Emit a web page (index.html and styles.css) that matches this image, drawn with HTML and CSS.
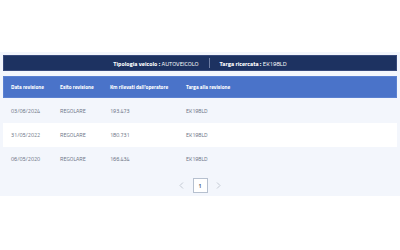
FILE: index.html
```html
<!DOCTYPE html>
<html lang="it">
<head>
<meta charset="utf-8">
<link rel="stylesheet" href="styles.css">
</head>
<body>
<section class="panel">
  <div class="summary">
    <span><b>Tipologia veicolo :</b> AUTOVEICOLO</span>
    <span class="sep"></span>
    <span><b>Targa ricercata :</b> EK198LD</span>
  </div>
  <div class="table">
    <div class="row head">
      <div>Data revisione</div><div>Esito revisione</div><div>Km rilevati dall'operatore</div><div>Targa alla revisione</div>
    </div>
    <div class="row">
      <div>03/06/2024</div><div>REGOLARE</div><div>193.473</div><div>EK198LD</div>
    </div>
    <div class="row alt">
      <div>31/05/2022</div><div>REGOLARE</div><div>180.731</div><div>EK198LD</div>
    </div>
    <div class="row">
      <div>06/05/2020</div><div>REGOLARE</div><div>166.434</div><div>EK198LD</div>
    </div>
  </div>
  <nav class="pager">
    <span class="chev">
      <svg width="5" height="7" viewBox="0 0 5 7"><path d="M4 0.5 L1 3.5 L4 6.5" fill="none" stroke="#c3c9d3" stroke-width="1"/></svg>
    </span>
    <span class="page">1</span>
    <span class="chev">
      <svg width="5" height="7" viewBox="0 0 5 7"><path d="M1 0.5 L4 3.5 L1 6.5" fill="none" stroke="#c3c9d3" stroke-width="1"/></svg>
    </span>
  </nav>
</section>
</body>
</html>
```
FILE: styles.css
```css
html, body { margin: 0; padding: 0; background: #ffffff; }
body { font-family: "Titillium Web", Lato, "Open Sans", sans-serif; }
.panel {
  margin-top: 52px;
  background: #f3f6fc;
  padding: 3px 3px 3px 3px;
  height: 144px;
  box-sizing: border-box;
}
.summary {
  height: 16px;
  background: #1d3261;
  color: #ffffff;
  font-size: 6.1px;
  display: flex;
  align-items: center;
  justify-content: center;
  gap: 10px;
  border: 1px solid #37497a;
  box-sizing: border-box;
}
.summary b { font-weight: 700; }
.sep { width: 1px; height: 10px; background: #6f7ea3; }
.table { margin-top: 5px; }
.row {
  display: grid;
  grid-template-columns: 49px 50px 76px 1fr;
  padding-left: 8px;
  height: 24px;
  align-items: center;
  font-size: 5.5px;
  color: #6b7385;
}
.row.head {
  background: #4a73c9;
  color: #ffffff;
  font-weight: 700;
  font-size: 5.3px;
  height: 22px;
  border: 1px solid #5a80d0;
  box-sizing: border-box;
  padding-left: 7px;
  margin-bottom: 1px;
}
.row.alt { background: #ffffff; }
.pager {
  display: flex;
  justify-content: center;
  align-items: center;
  gap: 8px;
  margin-top: 7px;
}
.chev { display: flex; width: 6px; justify-content: center; }
.page {
  width: 15px; height: 15px;
  box-sizing: border-box;
  border: 1px solid #b6c0cf;
  background: #ffffff;
  color: #4f5b71;
  font-size: 5px;
  font-weight: 700;
  display: flex; align-items: center; justify-content: center;
}
```
